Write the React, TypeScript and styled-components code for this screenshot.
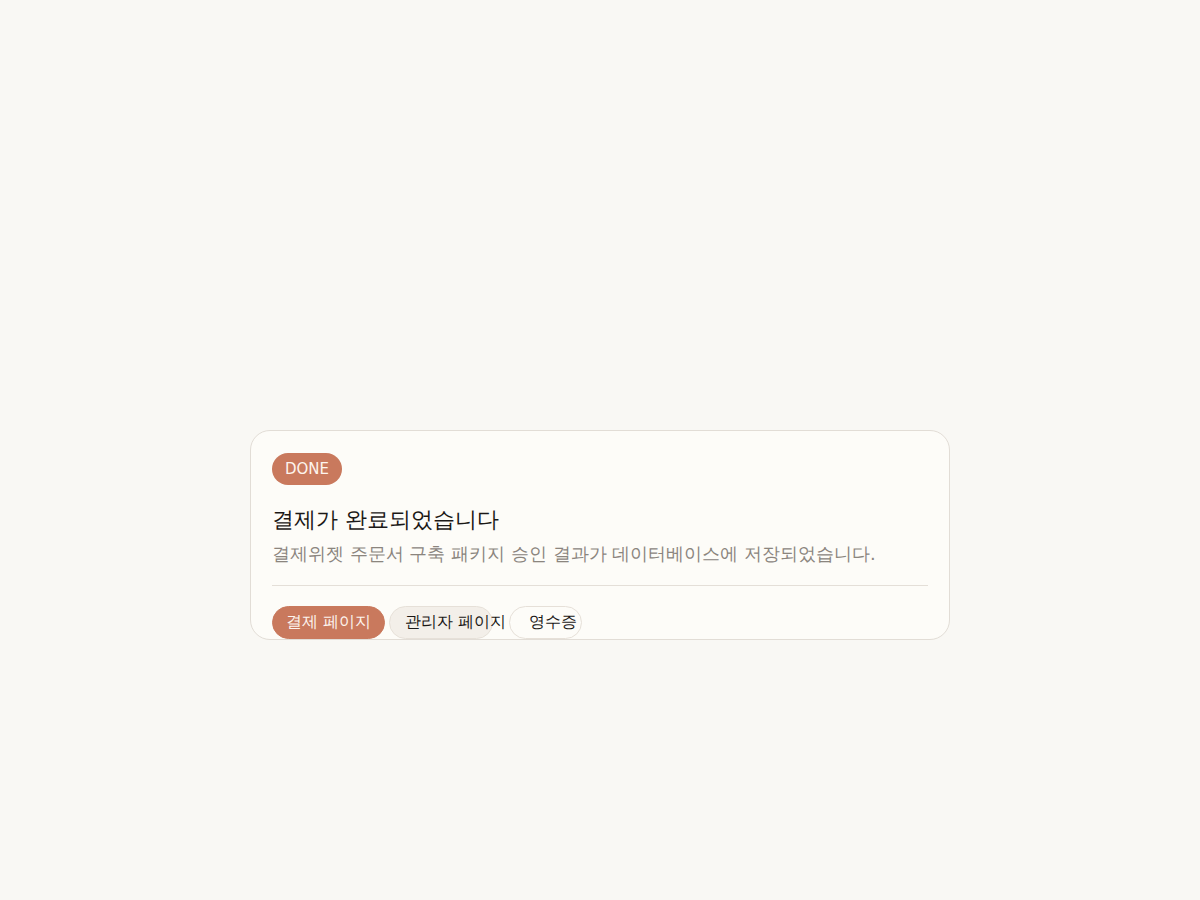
import { createGlobalStyle, styled } from "styled-components";

const GlobalStyle = createGlobalStyle`
    html, body {
        margin: 0;
        padding: 0;
        background: #f9f8f4;
        font-family: "DejaVu Sans", sans-serif;
    }
`;

const Page = styled.main`
    display: flex;
    justify-content: center;
    min-height: 100vh;
    padding-top: 430px;
    box-sizing: border-box;
`;

const Card = styled.section`
    width: 700px;
    height: 210px;
    box-sizing: border-box;
    padding: 22px 21px 0 21px;
    background: #fdfcf8;
    border: 1px solid #e2ddd6;
    border-radius: 20px;
    overflow: hidden;
`;

const Badge = styled.span`
    display: inline-flex;
    align-items: center;
    height: 32px;
    padding: 0 13px;
    border-radius: 16px;
    background: #c9795d;
    color: #fdf4ee;
    font-size: 15px;
`;

const Title = styled.h1`
    margin: 20px 0 0;
    font-size: 22px;
    line-height: 30px;
    font-weight: 400;
    color: #1b1816;
`;

const Subtitle = styled.p`
    margin: 6px 0 0;
    font-size: 18px;
    line-height: 26px;
    color: #8b857e;
`;

const Divider = styled.hr`
    margin: 18px 0 0;
    border: 0;
    border-top: 1px solid #e4dfd8;
`;

const Actions = styled.div`
    display: flex;
    gap: 4px;
    margin-top: 20px;
`;

type Variant = "primary" | "soft" | "outline";

const ActionButton = styled.button<{
    $variant: Variant;
    $w: number;
    $pl: number;
    $ml?: number;
}>`
    flex: none;
    width: ${(p) => p.$w}px;
    height: 33px;
    box-sizing: border-box;
    margin-left: ${(p) => p.$ml ?? 0}px;
    padding: 0 0 0 ${(p) => p.$pl}px;
    border-radius: 17px;
    font-family: inherit;
    font-size: 16px;
    text-align: left;
    white-space: nowrap;
    overflow: visible;
    cursor: pointer;
    border: 1px solid
        ${(p) => (p.$variant === "primary" ? "#c9795d" : "#e6e0d8")};
    background: ${(p) =>
        p.$variant === "primary"
            ? "#c9795d"
            : p.$variant === "soft"
              ? "#f3efe9"
              : "#fdfcf8"};
    color: ${(p) => (p.$variant === "primary" ? "#fdf4ee" : "#1b1816")};
`;

export default function App() {
    return (
        <>
            <GlobalStyle />
            <Page>
                <Card>
                    <Badge>DONE</Badge>
                    <Title>결제가 완료되었습니다</Title>
                    <Subtitle>
                        결제위젯 주문서 구축 패키지 승인 결과가 데이터베이스에 저장되었습니다.
                    </Subtitle>
                    <Divider />
                    <Actions>
                        <ActionButton $variant="primary" $w={113} $pl={13}>
                            결제 페이지
                        </ActionButton>
                        <ActionButton $variant="soft" $w={104} $pl={15}>
                            관리자 페이지
                        </ActionButton>
                        <ActionButton $variant="outline" $w={73} $pl={19} $ml={12}>
                            영수증
                        </ActionButton>
                    </Actions>
                </Card>
            </Page>
        </>
    );
}
